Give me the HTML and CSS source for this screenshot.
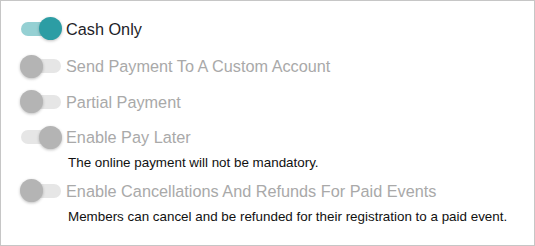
FILE: index.html
```html
<!DOCTYPE html>
<html>
<head>
<meta charset="utf-8">
<link rel="stylesheet" href="styles.css">
</head>
<body>
<div class="panel">
  <div class="row first">
    <span class="switch on"><span class="track"></span><span class="thumb"></span></span>
    <span class="label active">Cash Only</span>
  </div>
  <div class="row">
    <span class="switch off"><span class="track"></span><span class="thumb"></span></span>
    <span class="label">Send Payment To A Custom Account</span>
  </div>
  <div class="row">
    <span class="switch off"><span class="track"></span><span class="thumb"></span></span>
    <span class="label">Partial Payment</span>
  </div>
  <div class="row">
    <span class="switch on disabled"><span class="track"></span><span class="thumb"></span></span>
    <span class="label">Enable Pay Later</span>
  </div>
  <p class="desc">The online payment will not be mandatory.</p>
  <div class="row">
    <span class="switch off"><span class="track"></span><span class="thumb"></span></span>
    <span class="label">Enable Cancellations And Refunds For Paid Events</span>
  </div>
  <p class="desc">Members can cancel and be refunded for their registration to a paid event.</p>
</div>
</body>
</html>
```
FILE: styles.css
```css
html, body {
  margin: 0;
  padding: 0;
  background: #ffffff;
}
body {
  font-family: "Liberation Sans", Arial, sans-serif;
}
.panel {
  box-sizing: border-box;
  width: 535px;
  height: 246px;
  border: 1px solid #c6c6c6;
  padding: 10px 0 0 19px;
  display: flex;
  flex-direction: column;
}
.row {
  display: flex;
  align-items: center;
  height: 35.5px;
  gap: 4px;
}
.row.first {
  margin-bottom: 2px;
}
.switch {
  position: relative;
  width: 42px;
  height: 23px;
  flex: none;
}
.track {
  position: absolute;
  left: 1px;
  right: 1px;
  top: 4.5px;
  height: 14px;
  border-radius: 7px;
  background: #e6e6e6;
}
.thumb {
  position: absolute;
  top: 0;
  left: 0;
  width: 23px;
  height: 23px;
  border-radius: 50%;
  background: #b4b4b4;
  box-shadow: 0 1px 3px rgba(0, 0, 0, 0.25);
}
.switch.on .thumb {
  left: auto;
  right: 0;
}
.switch.on .track {
  background: #95d0d3;
}
.switch.on .thumb {
  background: #2c9da4;
}
.switch.on.disabled .track {
  background: #e6e6e6;
}
.switch.on.disabled .thumb {
  background: #b4b4b4;
}
.label {
  font-size: 16.25px;
  color: #a9a9a9;
  white-space: nowrap;
  padding-top: 1px;
}
.label.active {
  color: #1e1e28;
}
.desc {
  margin: 0 0 2px 48px;
  font-size: 13.4px;
  line-height: 16px;
  color: #111111;
  height: 16px;
  white-space: nowrap;
}
```
